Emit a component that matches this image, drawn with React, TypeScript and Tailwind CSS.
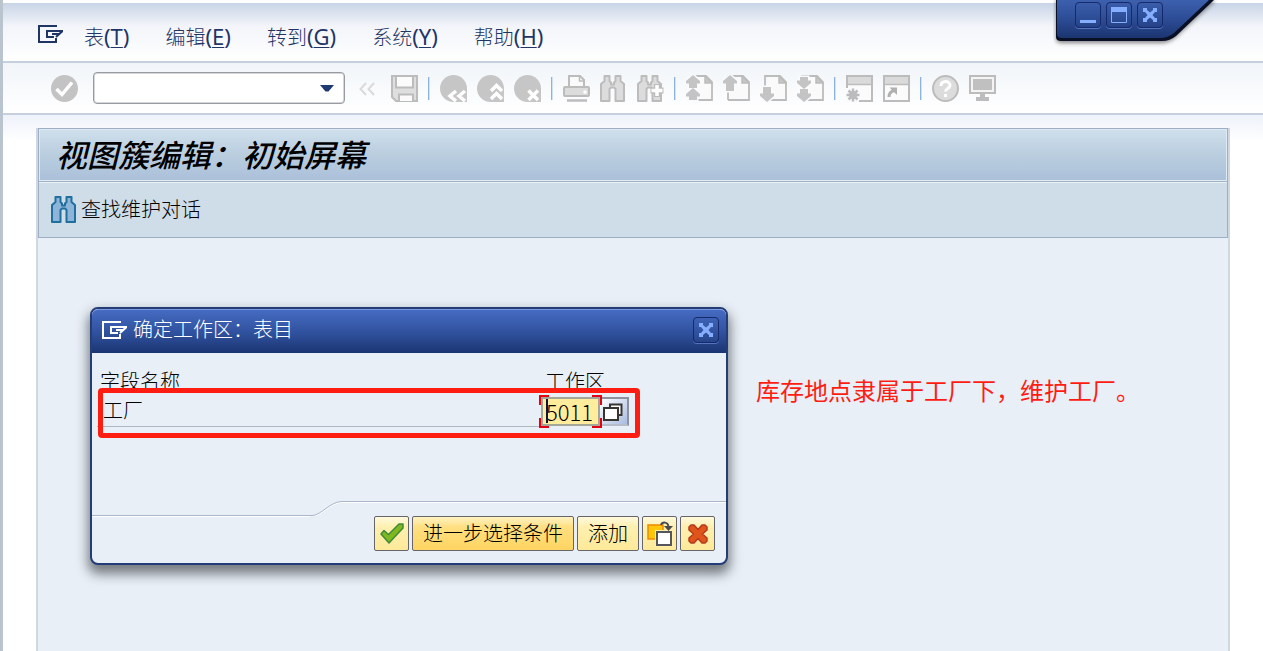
import type { ReactNode } from "react";

const menus = [
  { label: "表", hotkey: "T" },
  { label: "编辑", hotkey: "E" },
  { label: "转到", hotkey: "G" },
  { label: "系统", hotkey: "Y" },
  { label: "帮助", hotkey: "H" },
];

function MenuIcon() {
  return (
    <svg width="25" height="18" viewBox="0 0 25 18" fill="none" stroke="currentColor" strokeWidth="2">
      <path d="M18 2V1H1v16h17v-4" />
      <path d="M25 6H9v6h7M24.500 6L18 12M14 9h7" />
    </svg>
  );
}

function ToolIcon({ children }: { children: ReactNode }) {
  return (
    <svg width="27" height="27" viewBox="0 0 27 27" fill="none" stroke="#bcbcbc" strokeWidth="2">
      {children}
    </svg>
  );
}

const binoculars =
  "M4.500 1h5v5l1.500 1.500v2h3v-2L15.500 6V1h5v5L24 9v17h-8.500V14L14 12.500h-3L9.500 14v12H1V9l3.500-3z";
const page = "M9 1h11l6 6v18H5";

function Binoculars({ fill, stroke }: { fill: string; stroke: string }) {
  return <path d={binoculars} fill={fill} stroke={stroke} strokeWidth="2" strokeLinejoin="round" />;
}

function CheckCircle() {
  return (
    <ToolIcon>
      <circle cx="13.500" cy="13.500" r="13.500" fill="#c3c3c3" stroke="none" />
      <path d="M5.500 14l5.500 5.500L21 7.500" stroke="#fff" strokeWidth="3.500" />
    </ToolIcon>
  );
}

function Floppy() {
  return (
    <ToolIcon>
      <path d="M1 1h25v25H5l-4-4z" fill="#dedede" />
      <path d="M5 1h17v11.500H5zM8 26v-6.500h14V26" fill="#fbfbfb" />
    </ToolIcon>
  );
}

function NavCircle({ glyph }: { glyph: string }) {
  return (
    <ToolIcon>
      <path d="M13.500 0a13.500 13.500 0 0 1 13.500 13.500V27H13.500a13.500 13.500 0 0 1 0-27z" fill="#c6c6c6" stroke="none" />
      <path d={glyph} stroke="#fff" strokeWidth="3.500" />
    </ToolIcon>
  );
}

function Printer() {
  return (
    <ToolIcon>
      <path d="M6 12V1h11l4 4v7" fill="#fafafa" />
      <path d="M16.500 1v5H21" strokeWidth="1.500" />
      <rect x="1" y="12" width="25" height="9" rx="1" fill="#dcdcdc" />
      <circle cx="22" cy="17" r="1.800" fill="#fff" stroke="none" />
      <path d="M4 25.500h20" strokeWidth="2.500" />
    </ToolIcon>
  );
}

function PageIcon({ arrow }: { arrow: string }) {
  return (
    <ToolIcon>
      <path d={page} fill="#fafafa" strokeWidth="1.800" />
      <path d="M5 25V1h7" strokeWidth="1.800" />
      <path d="M19 1v7h7z" fill="#c6c6c6" strokeWidth="1.500" />
      <path d={arrow} fill="#fafbfd" stroke="#fafbfd" strokeWidth="3" />
      <path d={arrow} fill="#c4c4c4" stroke="none" />
    </ToolIcon>
  );
}

function SessionIcon({ children }: { children: ReactNode }) {
  return (
    <ToolIcon>
      <path d="M1 1h25v25H1z" fill="#fbfbfb" />
      <path d="M2 2h23v7H2z" fill="#dadada" stroke="none" />
      <path d="M1 9.500h25" strokeWidth="1.500" />
      {children}
    </ToolIcon>
  );
}

const toolGroups = [
  [
    { name: "返回", icon: <NavCircle glyph="M16 16l-6 5 6 5M25 16l-6 5 6 5" /> },
    { name: "退出", icon: <NavCircle glyph="M14 16l5.500-5.500L25 16M14 24l5.500-5.500L25 24" /> },
    { name: "取消", icon: <NavCircle glyph="M14.500 15.500l9.500 9.500M24 15.500L14.500 25" /> },
  ],
  [
    { name: "打印", icon: <Printer /> },
    { name: "查找", icon: <ToolIcon><Binoculars fill="#dcdcdc" stroke="#bcbcbc" /></ToolIcon> },
    {
      name: "继续查找",
      icon: (
        <ToolIcon>
          <Binoculars fill="#dcdcdc" stroke="#bcbcbc" />
          <path d="M20 9v13M13.500 15.500h13" strokeWidth="6" />
          <path d="M20 10v11M14.500 15.500h11" stroke="#fff" strokeWidth="3.500" />
        </ToolIcon>
      ),
    },
  ],
  [
    {
      name: "第一页",
      icon: <PageIcon arrow="M7 0l7 6v2.500h-3V13H3V8.500H0V6zM7 13l7 6v2.500h-3V25H3v-3.500H0V19z" />,
    },
    { name: "上一页", icon: <PageIcon arrow="M7 0l7 6v2.500h-3V16H3V8.500H0V6z" /> },
    { name: "下一页", icon: <PageIcon arrow="M7 27l7-6v-2.500h-3V12H3v6.500H0V21z" /> },
    {
      name: "最后一页",
      icon: <PageIcon arrow="M7 14l7-6V5.500h-3V2H3v3.500H0V8zM7 27l7-6v-2.500h-3V14H3v4.500H0V21z" />,
    },
  ],
  [
    {
      name: "新建会话",
      icon: (
        <SessionIcon>
          <path d="M-1 13h14v15H-1z" fill="#fafbfd" stroke="none" />
          <path d="M7 13.500v13M.5 20h13M2.500 15.500l9 9M11.500 15.500l-9 9" strokeWidth="2.500" />
          <circle cx="7" cy="20" r="4" fill="#bcbcbc" stroke="none" />
        </SessionIcon>
      ),
    },
    {
      name: "创建快捷方式",
      icon: (
        <SessionIcon>
          <path d="M6 22c0-4 2-6 6-6.500" strokeWidth="3" stroke="#b0b0b0" />
          <path d="M6.500 12.500H14V20z" fill="#b0b0b0" stroke="none" />
        </SessionIcon>
      ),
    },
  ],
  [
    {
      name: "帮助",
      icon: (
        <ToolIcon>
          <circle cx="13.500" cy="13.500" r="12.500" fill="#dcdcdc" />
          <path d="M9 11c0-3.500 2-4.500 4.500-4.500S18 8 18 10.500c0 3-4.500 3-4.500 6" stroke="#fff" strokeWidth="3" />
          <path d="M12 19h3v3h-3z" fill="#fff" stroke="none" />
        </ToolIcon>
      ),
    },
    {
      name: "定制本地布局",
      icon: (
        <ToolIcon>
          <path d="M1 1h25v17H1z" fill="#f4f4f4" />
          <path d="M4 4h19v11H4z" fill="#c0c0c0" stroke="none" />
          <path d="M11 19h5v3h4v4H7v-4h4z" fill="#bcbcbc" stroke="none" />
        </ToolIcon>
      ),
    },
  ],
];

function ToolButton({ name, children }: { name: string; children: ReactNode }) {
  return (
    <button type="button" aria-label={name} className="size-[27px] shrink-0">
      {children}
    </button>
  );
}

function Separator() {
  return <span className="h-[23px] w-0.5 shrink-0 border-l border-[#8fb4dc] bg-[#cfe2f4]" />;
}

function ControlButton({ name, children }: { name: string; children: ReactNode }) {
  return (
    <button
      type="button"
      aria-label={name}
      className="size-[26px] shrink-0 rounded-sm border border-[#16296a] shadow-[0_1px_0_#5474c0]"
    >
      <svg width="24" height="24" viewBox="0 0 24 24" fill="none" stroke="#86aeff">
        {children}
      </svg>
    </button>
  );
}

function CloseGlyph() {
  return (
    <path
      d="M5 5h4v2l3 2.500L15 7V5h4v4h-2l-2.500 3L17 15h2v4h-4v-2l-3-2.500L9 17v2H5v-4h2l2.500-3L7 9H5z"
      fill="#86aeff"
      stroke="none"
    />
  );
}

function WindowControls() {
  return (
    <div className="absolute top-0 right-[45px]">
      <svg width="165" height="48" viewBox="0 0 165 48" className="block">
        <defs>
          <linearGradient id="tab" x1="0" y1="0" x2="0" y2="1">
            <stop offset="0" stopColor="#3d60ae" />
            <stop offset="0.500" stopColor="#2c4c95" />
            <stop offset="1" stopColor="#1b3570" />
          </linearGradient>
          <filter id="soft" x="-10%" y="-10%" width="120%" height="130%">
            <feGaussianBlur stdDeviation="2" />
          </filter>
        </defs>
        <path d="M3 0v38q0 5 5 5h100q8 0 15-6l38-35V0z" fill="#555" opacity="0.700" filter="url(#soft)" />
        <path d="M3 0v37q0 4 5 4h101q8 0 14-5l38-36z" fill="#090f24" />
        <path d="M4 0v34q0 4 5 4h98q8 0 14-5L156 0z" fill="url(#tab)" />
      </svg>
      <div className="absolute top-0.5 left-[22px] flex gap-[5px]">
        <ControlButton name="最小化">
          <path d="M4 18.500h16" strokeWidth="3" />
        </ControlButton>
        <ControlButton name="最大化">
          <path d="M4.500 5v14.500h15V5" />
          <path d="M4 6.500h16" strokeWidth="5" />
        </ControlButton>
        <ControlButton name="关闭">
          <CloseGlyph />
        </ControlButton>
      </div>
    </div>
  );
}

function MenuBar() {
  return (
    <nav className="flex h-[58px] items-center gap-[36px] bg-linear-to-b from-[#c8d4e6] via-[#f3f5fa] via-40% to-white pt-2.5 pl-[35px] text-xl text-[#1f3566]">
      <div className="flex items-center gap-[21px]">
        <button type="button" aria-label="系统菜单" className="mb-1.5">
          <MenuIcon />
        </button>
        <MenuItem {...menus[0]} />
      </div>
      {menus.slice(1).map((menu) => (
        <MenuItem key={menu.hotkey} {...menu} />
      ))}
    </nav>
  );
}

function MenuItem({ label, hotkey }: { label: string; hotkey: string }) {
  return (
    <button type="button" className="leading-7 whitespace-nowrap">
      <span className="font-light">{label}</span>
      <span className="font-['Noto_Sans'] text-[22px]">
        (<span className="underline decoration-1 underline-offset-2">{hotkey}</span>)
      </span>
    </button>
  );
}

function Toolbar() {
  return (
    <div className="flex h-[54px] items-center gap-[10px] border-y-2 border-[#c6cfdd] bg-linear-to-b from-[#f1f5f9] to-white pl-12">
      <ToolButton name="回车">
        <CheckCircle />
      </ToolButton>
      <div className="ml-[5px] flex h-8 w-[252px] shrink-0 rounded-sm border border-[#989ba0] bg-white shadow-[inset_0_0_0_1px_#d4d6d9]">
        <input aria-label="命令" className="min-w-0 flex-1 px-1 text-xl outline-none" />
        <button type="button" aria-label="历史命令" className="w-8 pl-2">
          <svg width="14" height="7" viewBox="0 0 14 7">
            <path d="M0 0h14L8.500 6.500h-3z" fill="#1f3a73" />
          </svg>
        </button>
      </div>
      <div className="-ml-px flex items-center gap-[10px]">
        <ToolButton name="收起">
          <ToolIcon>
            <path d="M12 8l-5.500 6 5.500 6M20 8l-5.500 6 5.500 6" stroke="#dadada" />
          </ToolIcon>
        </ToolButton>
        <ToolButton name="保存">
          <Floppy />
        </ToolButton>
        {toolGroups.map((group, i) => (
          <div key={i} className="flex items-center gap-[10px]">
            <Separator />
            {group.map((tool) => (
              <ToolButton key={tool.name} name={tool.name}>
                {tool.icon}
              </ToolButton>
            ))}
          </div>
        ))}
      </div>
    </div>
  );
}

function DialogButton({ name, children }: { name: string; children: ReactNode }) {
  return (
    <button
      type="button"
      aria-label={name}
      className="flex size-[35px] items-center justify-center rounded-xs border border-[#66656a] bg-linear-to-b from-[#fff9dc] via-[#fff0b0] via-30% to-[#ffe999]"
    >
      {children}
    </button>
  );
}

function FieldTable() {
  return (
    <div className="relative h-[148px] pt-[14px] pr-[97px] pl-[5px]">
      <table className="w-full table-fixed border-collapse text-xl text-black">
        <thead>
          <tr className="h-[30px] text-left leading-7 font-light">
            <th className="p-0 pl-[3px] font-light">字段名称</th>
            <th className="w-[88px] p-0 pl-1 font-light">工作区</th>
          </tr>
        </thead>
        <tbody>
          <tr className="h-[29px]">
            <td className="border-b border-[#aeb8c2] p-0 pl-[6px] leading-7 font-light">
              <label htmlFor="plant">工厂</label>
            </td>
            <td className="p-0">
              <div className="flex h-[29px]">
                <div className="relative w-[59px]">
                  <input
                    id="plant"
                    defaultValue="5011"
                    className="h-[29px] w-full border-2 border-[#a4a698] bg-[#ffec9c] pl-[3px] font-['Noto_Sans_CJK_SC'] text-[22px] font-light outline-none"
                  />
                  <span className="absolute top-[2px] left-[5px] h-6 w-0.5 bg-[#0b1340]" />
                  <svg width="63" height="33" viewBox="0 0 63 33" className="absolute -top-0.5 -left-0.5 max-w-none" fill="none" stroke="#e60012" strokeWidth="2">
                    <path d="M10 1H1v9M53 1h9v9M1 23v9h9M53 32h9v-9" />
                  </svg>
                </div>
                <button
                  type="button"
                  aria-label="搜索帮助"
                  className="w-[29px] border-2 border-l-0 border-[#8e929c] border-b-[#b7bccb] bg-linear-to-br from-white to-[#a9bce0] pl-[3px]"
                >
                  <svg width="20" height="18" viewBox="0 0 20 18" fill="#fff" stroke="#37352f" strokeWidth="2">
                    <path d="M7 5V1.500h11.500V12H15" />
                    <path d="M1 5h14v12H1z" />
                  </svg>
                </button>
              </div>
            </td>
          </tr>
        </tbody>
      </table>
      <div className="pointer-events-none absolute top-[35px] left-[6px] h-[50px] w-[542px] rounded-sm border-5 border-[#ff1d12]" />
    </div>
  );
}

function WorkAreaDialog() {
  return (
    <section
      role="dialog"
      aria-labelledby="dialog-title"
      className="absolute top-[179px] left-[52px] w-[638px] rounded-lg border-2 border-[#243c78] bg-[#e8eff7] shadow-[0_7px_12px_2px_rgba(40,45,50,0.600)]"
    >
      <header className="flex h-11 items-center gap-[6px] rounded-t-md border-t border-[#7d9bdc] bg-linear-to-b from-[#456bc2] via-[#2f509c] via-55% to-[#1b3572] pr-[7px] pb-1 pl-[10px] text-white">
        <MenuIcon />
        <h2 id="dialog-title" className="flex-1 text-xl leading-7 font-light">
          确定工作区：表目
        </h2>
        <ControlButton name="关闭对话框">
          <CloseGlyph />
        </ControlButton>
      </header>
      <FieldTable />
      <div className="flex h-[15px]">
        <span className="w-[218px] self-end border-b border-[#aab6ca] shadow-[0_1px_0_#fff]" />
        <svg width="36" height="15" viewBox="0 0 36 15" fill="none" className="shrink-0">
          <path d="M0 15.500h2c9 0 18-14 30-14h4" stroke="#fff" />
          <path d="M0 14.500h2c9 0 18-14 30-14h4" stroke="#aab6ca" />
        </svg>
        <span className="flex-1 border-t border-[#aab6ca] shadow-[inset_0_1px_0_#fff]" />
      </div>
      <footer className="flex justify-end gap-[3px] pr-[11px] pb-3">
        <DialogButton name="确认">
          <svg width="24" height="22" viewBox="0 0 24 22">
            <path d="M1 11l3-3.500 4.500 4L19 1h4v4L9 20z" fill="#7fb81e" stroke="#3f8a3c" strokeWidth="1.500" strokeLinejoin="round" />
          </svg>
        </DialogButton>
        <button
          type="button"
          className="h-[35px] w-[162px] rounded-xs border border-[#66656a] bg-linear-to-b from-[#fff3c4] via-[#ffdf80] via-30% to-[#ffd561] text-xl font-light text-black"
        >
          进一步选择条件
        </button>
        <button
          type="button"
          className="h-[35px] w-[62px] rounded-xs border border-[#66656a] bg-linear-to-b from-[#fff9dc] via-[#fff0b0] via-30% to-[#ffe999] text-xl font-light text-black"
        >
          添加
        </button>
        <DialogButton name="复制">
          <svg width="26" height="26" viewBox="0 0 26 26" fill="none">
            <path d="M1 4h15v14H1z" fill="#ffc60a" stroke="#ee8b00" strokeWidth="1.500" />
            <path d="M8 9h18v17H8z" fill="#fff0b0" />
            <path d="M10 11h14v13H10z" fill="#fff" stroke="#55555a" strokeWidth="2" />
            <path d="M14 4c1-3 7-4 7.500 2" stroke="#4a4a4e" strokeWidth="2" />
            <path d="M17 5h9l-4.500 5z" fill="#4a4a4e" />
          </svg>
        </DialogButton>
        <DialogButton name="取消对话框">
          <svg width="20" height="20" viewBox="0 0 20 20">
            <path
              d="M1 3l2-2h3l4 4.500L14 1h3l2 2v3l-4.500 4 4.500 4v3l-2 2h-3l-4-4.500L6 19H3l-2-2v-3l4.500-4L1 6z"
              fill="#e0561a"
              stroke="#b5391f"
              strokeWidth="1.500"
              strokeLinejoin="round"
            />
          </svg>
        </DialogButton>
      </footer>
    </section>
  );
}

export default function App() {
  return (
    <div className="relative flex min-h-screen flex-col overflow-hidden border-l-3 border-[#b9c4cf] bg-white pt-[3px] font-['Liberation_Sans','Noto_Sans_CJK_SC',sans-serif]">
      <MenuBar />
      <Toolbar />
      <div className="flex flex-1 flex-col bg-linear-to-b from-[#eef2fa] to-white to-5% pt-[13px] pr-[33px] pl-[33px]">
        <main className="relative flex flex-1 flex-col border-x-2 border-[#cfd7e3] bg-[#e8eff6]">
          <div className="border border-[#9dafc4]">
            <h1 className="flex h-[52px] items-center border border-[#e0eaf3] bg-linear-to-b from-[#cfdfec] via-[#bccfe0] via-45% to-[#abc1da] pt-1 pl-4 text-[31px] leading-10 font-medium text-black italic">
              视图簇编辑：初始屏幕
            </h1>
            <div className="flex h-[56px] items-center border-t border-[#a3b3c6] bg-[#cfdde8] pl-3 shadow-[inset_0_1px_0_#e9f1f7]">
              <button type="button" className="flex items-center gap-[3px] text-xl leading-7 font-light text-black">
                <svg width="27" height="27" viewBox="0 0 27 27">
                  <Binoculars fill="#8fb4d9" stroke="#1f6f9f" />
                </svg>
                查找维护对话
              </button>
            </div>
          </div>
          <WorkAreaDialog />
          <p className="absolute top-[246px] left-[718px] text-2xl leading-9 whitespace-nowrap text-[#ff1d12]">
            库存地点隶属于工厂下，维护工厂。
          </p>
        </main>
      </div>
      <WindowControls />
    </div>
  );
}
